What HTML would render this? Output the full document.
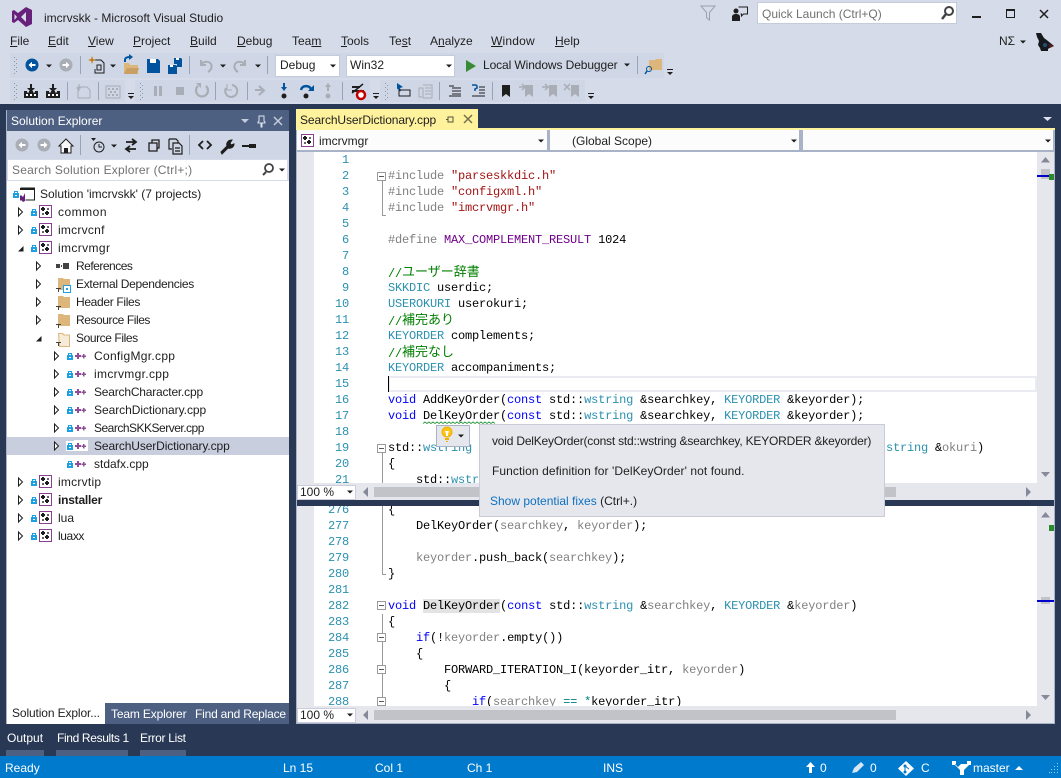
<!DOCTYPE html>
<html><head><meta charset="utf-8"><title>imcrvskk - Microsoft Visual Studio</title>
<style>
html,body{margin:0;padding:0}
body{width:1061px;height:778px;overflow:hidden;position:relative;background:#293955;font-family:"Liberation Sans","Noto Sans CJK JP",sans-serif;font-size:12px;color:#1e1e1e}
.b{position:absolute}
.t{position:absolute;white-space:pre;line-height:16px;height:16px}
.t u{text-decoration:underline}
.pane{position:absolute;left:297px;width:740px;overflow:hidden;background:#fff;font-family:"Liberation Mono","Noto Sans CJK JP",monospace;font-size:12px;letter-spacing:-.2px;color:#000}
.mg{position:absolute;left:0;top:0;bottom:0;width:17px;background:#e6e7ed}
.n,.c{position:absolute;top:0}
.n{left:17px;width:35px;text-align:right;color:#2b91af}
.c{left:91px}
.n div,.c div{height:16px;line-height:16px;white-space:pre}
.k{color:#0000ff}.y{color:#2b91af}.s{color:#a31515}.p{color:#808080}.m{color:#6f008a}.g{color:#008000}.a{color:#808080}.o{color:#008080}
.j{font-size:13px;line-height:16px;letter-spacing:0;font-family:"Noto Sans CJK JP",sans-serif;position:relative;top:-1px}
svg{position:absolute;left:0;top:0}
</style></head><body>

<div class="b" style="left:0;top:0;width:1061px;height:104px;background:#d6dbe9"></div>
<div class="t" style="left:44px;top:10px">imcrvskk - Microsoft Visual Studio</div>
<div class="t" style="left:10px;top:33px"><u>F</u>ile</div>
<div class="t" style="left:48px;top:33px"><u>E</u>dit</div>
<div class="t" style="left:88px;top:33px"><u>V</u>iew</div>
<div class="t" style="left:133px;top:33px"><u>P</u>roject</div>
<div class="t" style="left:190px;top:33px"><u>B</u>uild</div>
<div class="t" style="left:237px;top:33px"><u>D</u>ebug</div>
<div class="t" style="left:292px;top:33px">Tea<u>m</u></div>
<div class="t" style="left:341px;top:33px"><u>T</u>ools</div>
<div class="t" style="left:389px;top:33px">Te<u>s</u>t</div>
<div class="t" style="left:430px;top:33px">A<u>n</u>alyze</div>
<div class="t" style="left:491px;top:33px;letter-spacing:.2px"><u>W</u>indow</div>
<div class="t" style="left:555px;top:33px"><u>H</u>elp</div>
<div class="b" style="left:757px;top:2px;width:198px;height:20px;background:#fff;border:1px solid #c4cbdb"></div>
<div class="t" style="left:762px;top:6px;color:#717171">Quick Launch (Ctrl+Q)</div>
<div class="t" style="left:999px;top:33px">NΣ</div>

<div class="b" style="left:10px;top:53px;width:665px;height:25px;background:#cfd6e5"></div>
<div class="b" style="left:664px;top:53px;width:11px;height:25px;background:#d6dbe9"></div>
<div class="b" style="left:10px;top:80px;width:586px;height:22px;background:#cfd6e5"></div>
<div class="b" style="left:125px;top:80px;width:10px;height:22px;background:#d6dbe9"></div>
<div class="b" style="left:370px;top:80px;width:10px;height:22px;background:#d6dbe9"></div>
<div class="b" style="left:585px;top:80px;width:11px;height:22px;background:#d6dbe9"></div>
<div class="b" style="left:275px;top:55px;width:63px;height:20px;background:#fff;border:1px solid #c4cbdb"></div>
<div class="t" style="left:280px;top:57px">Debug</div>
<div class="b" style="left:346px;top:55px;width:107px;height:20px;background:#fff;border:1px solid #c4cbdb"></div>
<div class="t" style="left:350px;top:57px">Win32</div>
<div class="t" style="left:483px;top:57px;letter-spacing:-.1px">Local Windows Debugger</div>

<div class="b" style="left:6px;top:110px;width:283px;height:614px;background:#a9b3c7"></div>
<div class="b" style="left:7px;top:131px;width:282px;height:593px;background:#fff"></div>
<div class="b" style="left:7px;top:110px;width:282px;height:21px;background:#4d6082"></div>
<div class="t" style="left:11px;top:113px;color:#fff">Solution Explorer</div>
<div class="b" style="left:7px;top:131px;width:282px;height:28px;background:#cfd6e5"></div>
<div class="b" style="left:7px;top:159px;width:282px;height:22px;background:#d6dbe9"></div>
<div class="b" style="left:8px;top:160px;width:279px;height:20px;background:#fff"></div>
<div class="t" style="left:12px;top:162px;color:#717171;letter-spacing:.22px">Search Solution Explorer (Ctrl+;)</div>
<div class="b" style="left:7px;top:437px;width:282px;height:18px;background:#c9cede"></div>

<div class="t" style="left:40px;top:186px">Solution 'imcrvskk' (7 projects)</div>
<div class="t" style="left:58px;top:204px;letter-spacing:.5px">common</div>
<div class="t" style="left:58px;top:222px;letter-spacing:.25px">imcrvcnf</div>
<div class="t" style="left:58px;top:240px;letter-spacing:.38px">imcrvmgr</div>
<div class="t" style="left:76px;top:258px;letter-spacing:-.5px">References</div>
<div class="t" style="left:76px;top:276px;letter-spacing:-.29px">External Dependencies</div>
<div class="t" style="left:76px;top:294px;letter-spacing:-.33px">Header Files</div>
<div class="t" style="left:76px;top:312px;letter-spacing:-.43px">Resource Files</div>
<div class="t" style="left:76px;top:330px;letter-spacing:-.42px">Source Files</div>
<div class="t" style="left:94px;top:348px;letter-spacing:.3px">ConfigMgr.cpp</div>
<div class="t" style="left:94px;top:366px;letter-spacing:.33px">imcrvmgr.cpp</div>
<div class="t" style="left:94px;top:384px;letter-spacing:-.2px">SearchCharacter.cpp</div>
<div class="t" style="left:94px;top:402px;letter-spacing:-.05px">SearchDictionary.cpp</div>
<div class="t" style="left:94px;top:420px;letter-spacing:-.5px">SearchSKKServer.cpp</div>
<div class="t" style="left:94px;top:438px;letter-spacing:-.12px">SearchUserDictionary.cpp</div>
<div class="t" style="left:94px;top:456px">stdafx.cpp</div>
<div class="t" style="left:58px;top:474px;letter-spacing:.25px">imcrvtip</div>
<div class="t" style="left:58px;top:492px;font-weight:bold;letter-spacing:-.22px">installer</div>
<div class="t" style="left:58px;top:510px">lua</div>
<div class="t" style="left:58px;top:528px;letter-spacing:-.4px">luaxx</div>

<div class="b" style="left:105px;top:703px;width:184px;height:21px;background:#4d6082"></div>
<div class="t" style="left:12px;top:705px;letter-spacing:-.12px">Solution Explor...</div>
<div class="t" style="left:111px;top:706px;color:#fff;letter-spacing:-.15px">Team Explorer</div>
<div class="t" style="left:195px;top:706px;color:#fff;letter-spacing:-.2px">Find and Replace</div>

<div class="b" style="left:296px;top:109px;width:182px;height:20px;background:#fff29d"></div>
<div class="t" style="left:300px;top:112px;letter-spacing:-.1px">SearchUserDictionary.cpp</div>
<div class="b" style="left:296px;top:128px;width:759px;height:2px;background:#fff29d"></div>
<div class="b" style="left:296px;top:130px;width:759px;height:22px;background:#a9b3c7"></div>
<div class="b" style="left:297px;top:130px;width:250px;height:20px;background:#fcfcfc"></div>
<div class="b" style="left:550px;top:130px;width:249px;height:20px;background:#fcfcfc"></div>
<div class="b" style="left:803px;top:130px;width:250px;height:20px;background:#fcfcfc"></div>
<div class="t" style="left:319px;top:133px">imcrvmgr</div>
<div class="t" style="left:572px;top:133px">(Global Scope)</div>

<div class="pane" style="top:152px;height:331px">
<div class="mg"></div>
<div class="b" style="left:91px;top:224px;width:645px;height:12px;border:2px solid #eaeaf2"></div>
<div class="b" style="left:91px;top:224px;width:1px;height:16px;background:#000"></div>
<div class="n"><div>1</div><div>2</div><div>3</div><div>4</div><div>5</div><div>6</div><div>7</div><div>8</div><div>9</div><div>10</div><div>11</div><div>12</div><div>13</div><div>14</div><div>15</div><div>16</div><div>17</div><div>18</div><div>19</div><div>20</div><div>21</div></div>
<div class="c"><div> </div>
<div><span class="p">#include</span> <span class="s">"parseskkdic.h"</span></div>
<div><span class="p">#include</span> <span class="s">"configxml.h"</span></div>
<div><span class="p">#include</span> <span class="s">"imcrvmgr.h"</span></div>
<div> </div>
<div><span class="p">#define</span> <span class="m">MAX_COMPLEMENT_RESULT</span> 1024</div>
<div> </div>
<div class="g">//<span class="j">ユーザー辞書</span></div>
<div><span class="y">SKKDIC</span> userdic;</div>
<div><span class="y">USEROKURI</span> userokuri;</div>
<div class="g">//<span class="j">補完あり</span></div>
<div><span class="y">KEYORDER</span> complements;</div>
<div class="g">//<span class="j">補完なし</span></div>
<div><span class="y">KEYORDER</span> accompaniments;</div>
<div> </div>
<div><span class="k">void</span> AddKeyOrder(<span class="k">const</span> std::<span class="y">wstring</span> &amp;searchkey, <span class="y">KEYORDER</span> &amp;keyorder);</div>
<div><span class="k">void</span> DelKeyOrder(<span class="k">const</span> std::<span class="y">wstring</span> &amp;searchkey, <span class="y">KEYORDER</span> &amp;keyorder);</div>
<div> </div>
<div>std::<span class="y">wstring</span></div>
<div>{</div>
<div>    std::<span class="y">wstring</span></div></div>
<div class="b" style="left:589px;top:288px;white-space:pre;line-height:16px"><span class="y">string</span> &amp;<span class="a">okuri</span>)</div>
</div>

<div class="b" style="left:297px;top:483px;width:757px;height:17px;background:#e6e7ed"></div>
<div class="b" style="left:297px;top:485px;width:57px;height:13px;background:#fff;border:1px solid #ccd"></div>
<div class="t" style="left:300px;top:484px">100 %</div>
<div class="b" style="left:374px;top:487px;width:522px;height:10px;background:#c2c3c9"></div>

<div class="pane" style="top:506px;height:200px">
<div class="mg"></div>
<div class="n" style="top:-4px"><div>276</div><div>277</div><div>278</div><div>279</div><div>280</div><div>281</div><div>282</div><div>283</div><div>284</div><div>285</div><div>286</div><div>287</div><div>288</div></div>
<div class="c" style="top:-4px"><div>{</div>
<div>    DelKeyOrder(<span class="a">searchkey</span>, <span class="a">keyorder</span>);</div>
<div> </div>
<div>    <span class="a">keyorder</span>.push_back(<span class="a">searchkey</span>);</div>
<div>}</div>
<div> </div>
<div><span class="k">void</span> <span style="background:#e3e3e3">DelKeyOrder</span>(<span class="k">const</span> std::<span class="y">wstring</span> &amp;<span class="a">searchkey</span>, <span class="y">KEYORDER</span> &amp;<span class="a">keyorder</span>)</div>
<div>{</div>
<div>    <span class="k">if</span>(!<span class="a">keyorder</span>.empty())</div>
<div>    {</div>
<div>        FORWARD_ITERATION_I(keyorder_itr, <span class="a">keyorder</span>)</div>
<div>        {</div>
<div>            <span class="k">if</span>(<span class="a">searchkey</span> <span class="o">==</span> <span class="o">*</span>keyorder_itr)</div></div>
</div>

<div class="b" style="left:1037px;top:152px;width:17px;height:331px;background:#e6e7ed"></div>
<div class="b" style="left:1037px;top:506px;width:17px;height:200px;background:#e6e7ed"></div>
<div class="b" style="left:297px;top:706px;width:757px;height:17px;background:#e6e7ed"></div>
<div class="b" style="left:296px;top:723px;width:759px;height:1px;background:#a9b3c7"></div>
<div class="b" style="left:296px;top:152px;width:1px;height:571px;background:#a9b3c7"></div>
<div class="b" style="left:1054px;top:152px;width:1px;height:571px;background:#a9b3c7"></div>
<div class="b" style="left:297px;top:708px;width:57px;height:13px;background:#fff;border:1px solid #ccd"></div>
<div class="t" style="left:300px;top:707px">100 %</div>
<div class="b" style="left:374px;top:710px;width:522px;height:10px;background:#c2c3c9"></div>

<div class="t" style="left:7px;top:730px;color:#fff">Output</div>
<div class="t" style="left:57px;top:730px;color:#fff;letter-spacing:-.35px">Find Results 1</div>
<div class="t" style="left:140px;top:730px;color:#fff;letter-spacing:-.3px">Error List</div>
<div class="b" style="left:6px;top:750px;width:38px;height:6px;background:#4d6082"></div>
<div class="b" style="left:56px;top:750px;width:72px;height:6px;background:#4d6082"></div>
<div class="b" style="left:140px;top:750px;width:46px;height:6px;background:#4d6082"></div>
<div class="b" style="left:0;top:756px;width:1061px;height:22px;background:#007acc"></div>
<div class="t" style="left:5px;top:760px;color:#fff">Ready</div>
<div class="t" style="left:283px;top:760px;color:#fff">Ln 15</div>
<div class="t" style="left:375px;top:760px;color:#fff">Col 1</div>
<div class="t" style="left:467px;top:760px;color:#fff">Ch 1</div>
<div class="t" style="left:603px;top:760px;color:#fff">INS</div>
<div class="t" style="left:820px;top:760px;color:#fff">0</div>
<div class="t" style="left:870px;top:760px;color:#fff">0</div>
<div class="t" style="left:921px;top:760px;color:#fff">C</div>
<div class="t" style="left:973px;top:760px;color:#fff">master</div>

<svg width="1061" height="778" viewBox="0 0 1061 778">
<defs>
<path id="dn" d="M-3-1.5h6L0 1.5z" fill="#1e1e1e"/>
<path id="exp" d="M.5 0l4 4-4 4z" fill="#fff" stroke="#1e1e1e"/>
<path id="col" d="M5.5 0v5.5H0z" fill="#1e1e1e"/>
<g id="lock"><path d="M1.5 3V1.5h3V3" fill="none" stroke="#1ba1e2"/><rect x="0" y="3" width="6" height="5" fill="#1ba1e2"/><rect x="2" y="5" width="2" height="1" fill="#fff"/></g>
<g id="proj"><rect x=".5" y=".5" width="12" height="12" fill="#fff" stroke="#8a3f92"/><path d="M3 2h2v1h1v2H5v1H3V5H2V3h1zM7 6h2v1h1v2H9v1H7V9H6V7h1z" fill="#1e1e1e"/><path d="M8 3h2v2H8zM3 8h2v2H3z" fill="#666"/></g>
<path id="pp" d="M2 2h2v2h2v2H4v2H2V6H0V4h2zM8 3h1.500v1.500H11v1.500H9.500v1.500H8V6H6.500V4.500H8z" fill="#8f4d97"/>
<g id="fold"><path d="M2 1h5l1 1h6v11H2z" fill="#dcb67a"/><path d="M0 11h5v1H3v3H2v-3H0z" fill="#424242"/></g>
<g id="grip"><path d="M0 0h1v1H0zM2 2h1v1H2zM0 4h1v1H0zM2 6h1v1H2zM0 8h1v1H0zM2 10h1v1H2zM0 12h1v1H0zM2 14h1v1H2zM0 16h1v1H0z" fill="#8f96a6"/></g>
<g id="ovf"><path d="M-3-1h6v1h-6zM-3 2h6L0 5z" fill="#1e1e1e"/></g>
<g id="circ"><circle r="6.500" fill="currentColor"/><path d="M-3.500 0L0-3.200V-1h3.500v2H0v2.200z" fill="#fff"/></g>
<g id="build"><path d="M-7 7V0h3v1.500h2V0h4v1.500h2V0h3v7z" fill="#1e1e1e"/><path d="M-1-7h2v4h3L0 1-4-3h3z" fill="#1e1e1e"/><path d="M-5 3h2v2h-2zM-1 3h2v2h-2zM3 3h2v2H3z" fill="#fff"/></g>
<g id="book"><path d="M-4-6h8V6L0 3-4 6z"/></g>
</defs>

<!-- title bar -->
<path d="M26 7l6 3v14l-6 3-8-7-4 3-2-1V11l2-1 4 3zM26 12l-5 5 5 5zM14.500 14v6l2.500-3z" fill="#68217a" fill-rule="evenodd"/>
<path d="M701 6h14l-5.500 6.500V20l-3-2.500V12.500z" fill="none" stroke="#9aa0ad"/>
<circle cx="736" cy="11" r="2.500" fill="#1e1e1e"/><path d="M732 21v-4c0-2 1.500-3 4-3s4 1 4 3v4z" fill="#1e1e1e"/><path d="M738.500 7h9v7h-4l-2 2v-2h-1" fill="none" stroke="#1e1e1e"/>
<circle cx="949" cy="11" r="4" fill="none" stroke="#424242" stroke-width="2"/><path d="M946 14l-4 5" stroke="#424242" stroke-width="2.500"/>
<rect x="972" y="16" width="9" height="2" fill="#1e1e1e"/>
<path d="M1006.500 9.500h8v8h-8z" fill="none" stroke="#1e1e1e"/><rect x="1006" y="9" width="9" height="2" fill="#1e1e1e"/>
<path d="M1040 10l8 8M1048 10l-8 8" stroke="#1e1e1e" stroke-width="1.500"/>
<use href="#dn" x="1023" y="42"/>
<path d="M1036 33h5l3 5 4 3 6 5-3 1-3 2v2h-7l-1-3-2-3 1-4-2-4z" fill="#16191e"/><path d="M1048 44l6 2-4 2z" fill="#5a1a1e"/><circle cx="1045" cy="45" r="2" fill="#24506e"/>

<!-- toolbar 1 -->
<use href="#grip" x="14" y="57"/>
<use href="#circ" x="32" y="65" color="#00539c"/><use href="#dn" x="49" y="66"/>
<use href="#circ" x="66" y="65" color="#a9adb5" transform="translate(132 0) scale(-1 1)"/>
<rect x="80" y="56" width="1" height="18" fill="#9aa3b5"/>
<path d="M93 60h8l3 3v10h-9v-4" fill="none" stroke="#1e1e1e"/><path d="M92 56l1 3 3 1-3 1-1 3-1-3-3-1 3-1z" fill="#c27d1a"/><rect x="97" y="65" width="4" height="5" fill="none" stroke="#1e1e1e"/>
<use href="#dn" x="113" y="66"/>
<path d="M124 63h5l1 2h8v9h-14z" fill="#dcb67a"/><path d="M124 74l3-6h12l-2 6z" fill="#c8a063"/><path d="M125 62v-2c0-2 2-3 5-3" fill="none" stroke="#00539c" stroke-width="2"/><path d="M129 54l4 3-4 3z" fill="#00539c"/>
<path d="M147 59h11l2 2v12h-13z" fill="#00539c"/><rect x="150" y="59" width="6" height="4" fill="#fff"/>
<path d="M168 65h8l1 1v8h-9z" fill="#00539c"/><path d="M174 58h7l1 1v8h-5v-3h-3z" fill="#00539c"/><rect x="170" y="65" width="3" height="2" fill="#fff"/><rect x="176" y="58" width="3" height="2" fill="#fff"/>
<rect x="189" y="56" width="1" height="18" fill="#9aa3b5"/>
<path d="M201 60v5h5M201.500 64.500c2-3.500 9-4 10 1 .5 3-1 5-3.500 6.500" fill="none" stroke="#a9adb5" stroke-width="2"/>
<use href="#dn" x="223" y="66"/>
<path d="M245 60v5h-5M244.500 64.500c-2-3.500-9-4-10 1-.5 3 1 5 3.500 6.500" fill="none" stroke="#a9adb5" stroke-width="2"/>
<use href="#dn" x="258" y="66"/>
<rect x="267" y="56" width="1" height="18" fill="#9aa3b5"/>
<use href="#dn" x="333" y="66"/><use href="#dn" x="449" y="66"/>
<path d="M466 60l10 6-10 6z" fill="#388a34"/>
<use href="#dn" x="627" y="65"/>
<rect x="637" y="56" width="1" height="18" fill="#9aa3b5"/>
<path d="M649 60h6l1-1h6v11h-13z" fill="#dcb67a"/><circle cx="649" cy="69" r="2.500" fill="none" stroke="#00539c"/><path d="M647 71l-2 3" stroke="#00539c" stroke-width="1.500"/>
<use href="#ovf" x="670" y="70"/>

<!-- toolbar 2 -->
<use href="#grip" x="14" y="83"/>
<use href="#build" x="31" y="91"/><use href="#build" x="53" y="91"/>
<rect x="67" y="82" width="1" height="18" fill="#9aa3b5"/>
<path d="M78 87h9l3 3v8H78zM76 88h5M79 84v7" fill="none" stroke="#a9adb5"/>
<rect x="98" y="82" width="1" height="18" fill="#9aa3b5"/>
<path d="M106 86h14v12h-14z" fill="none" stroke="#a9adb5"/><path d="M108 88h2v2h-2zM112 88h2v2h-2zM116 88h2v2h-2zM110 91h2v2h-2zM114 91h2v2h-2zM108 94h2v2h-2zM112 94h2v2h-2zM116 94h2v2h-2z" fill="#a9adb5"/>
<use href="#ovf" x="131" y="94"/>
<use href="#grip" x="140" y="83"/>
<path d="M154 86h3v10h-3zM159 86h3v10h-3z" fill="#a9adb5"/>
<rect x="176" y="87" width="8" height="8" fill="#a9adb5"/>
<path d="M198 86a6 6 0 1 0 8 0" fill="none" stroke="#a9adb5" stroke-width="2.200"/><path d="M196 83h5v5z" fill="#a9adb5"/>
<rect x="215" y="82" width="1" height="18" fill="#9aa3b5"/>
<path d="M226 88a6 6 0 1 0 6-3" fill="none" stroke="#a9adb5" stroke-width="2"/><path d="M227 84v6h5" fill="none" stroke="#a9adb5"/>
<rect x="247" y="82" width="1" height="18" fill="#9aa3b5"/>
<path d="M255 90h7M259 86l5 4.500-5 4.500" fill="none" stroke="#a9adb5" stroke-width="2"/>
<path d="M283 83h2v4h2l-3 4-3-4h2z" fill="#00539c"/><circle cx="284" cy="96" r="2.500" fill="#1e1e1e"/>
<path d="M301 90c1-5 8-5 10-1" fill="none" stroke="#00539c" stroke-width="2.500"/><path d="M314 85v6h-6z" fill="#00539c"/><circle cx="306" cy="96" r="2.500" fill="#1e1e1e"/>
<path d="M327 91v-4h-2l3-4 3 4h-2v4z" fill="#a9adb5"/><circle cx="328" cy="96" r="2.500" fill="#a9adb5"/>
<rect x="342" y="82" width="1" height="18" fill="#9aa3b5"/>
<path d="M352 87h8M352 91h12" stroke="#1e1e1e" stroke-width="2"/><path d="M352 93l11-9" stroke="#1e1e1e" stroke-width="1.500"/><circle cx="361" cy="95" r="4" fill="#fff" stroke="#c50000" stroke-width="2.500"/>
<use href="#ovf" x="376" y="94"/>
<use href="#grip" x="385" y="83"/>
<path d="M397 83l6 4-3 1 1 3-2 .5-1-3-1 1z" fill="#00539c"/><path d="M399 90h11v6h-11z" fill="none" stroke="#1e1e1e"/>
<path d="M419 88h4v9h-4zM423 85h9v13h-9M425 88h6M425 91h6M425 94h6" fill="none" stroke="#a9adb5"/>
<rect x="439" y="82" width="1" height="18" fill="#9aa3b5"/>
<path d="M449 86h5M452 88h9M452 91h9M452 94h9M449 96h12" stroke="#1e1e1e" fill="none"/>
<path d="M472 85h4l1 1v2l-2 1v2" fill="none" stroke="#00539c" stroke-width="1.500"/><path d="M479 87h6M479 90h6M479 93h6M472 96h13" stroke="#1e1e1e" fill="none"/>
<rect x="492" y="82" width="1" height="18" fill="#9aa3b5"/>
<use href="#book" x="506" y="91" fill="#1e1e1e"/>
<use href="#book" x="529" y="91" fill="#a9adb5"/><path d="M519 87h6l-3-3M525 87l-3 3" fill="none" stroke="#a9adb5" stroke-width="1.500"/>
<use href="#book" x="553" y="91" fill="#a9adb5"/><path d="M542 87h6l-3-3M548 87l-3 3" fill="none" stroke="#a9adb5" stroke-width="1.500"/>
<use href="#book" x="575" y="91" fill="#a9adb5"/><path d="M564 84l6 6M570 84l-6 6" stroke="#a9adb5" stroke-width="1.500"/>
<use href="#ovf" x="591" y="94"/>

<!-- solution explorer title -->
<path d="M241 119h8l-4 4z" fill="#c4cbdb"/>
<path d="M259 116h5v5l1 1v1h-3v4h-1v-4h-3v-1l1-1z" fill="none" stroke="#dfe3ee"/>
<path d="M274 117l8 8M282 117l-8 8" stroke="#c4cbdb" stroke-width="1.500"/>

<!-- solution explorer toolbar -->
<use href="#circ" x="22" y="145" color="#a9adb5"/>
<use href="#circ" x="-44" y="145" color="#a9adb5" transform="scale(-1 1)"/>
<path d="M59 146l7-7 7 7h-2v7H61v-7z" fill="#f6f6f6" stroke="#1e1e1e"/><rect x="64" y="148" width="4" height="5" fill="#1e1e1e"/>
<rect x="80" y="135" width="1" height="20" fill="#9aa3b5"/>
<circle cx="99" cy="147" r="5" fill="none" stroke="#1e1e1e"/><path d="M99 144v3h3" fill="none" stroke="#1e1e1e"/><path d="M91 138h5l-2.500 3z" fill="#1e1e1e"/>
<use href="#dn" x="114" y="146"/>
<path d="M126 142h10M132 139l4 3-4 3M136 149h-10M130 146l-4 3 4 3" fill="none" stroke="#1e1e1e" stroke-width="1.800"/>
<path d="M149 143h8v8h-8zM152 143v-3h7v8h-2" fill="none" stroke="#1e1e1e" stroke-width="1.300"/>
<path d="M169 139h7l2 2v2M169 139v10h3M173 143h6l3 3v8h-9z M175 148h5M175 151h5" fill="none" stroke="#1e1e1e" stroke-width="1.200"/>
<rect x="189" y="135" width="1" height="20" fill="#9aa3b5"/>
<path d="M203 141l-4 4 4 4M207 141l4 4-4 4" fill="none" stroke="#1e1e1e" stroke-width="1.800"/>
<path d="M221 152l6-6c-1-3 1-6 5-6l-2 3 1 2 3-1c0 3-3 5-6 4l-6 6z" fill="#1e1e1e" stroke="#1e1e1e"/>
<rect x="242" y="144" width="14" height="4" fill="#1e1e1e"/><rect x="242" y="144" width="7" height="1" fill="#cfd6e5"/><rect x="242" y="147" width="7" height="1" fill="#cfd6e5"/>
<circle cx="269" cy="168" r="4" fill="none" stroke="#424242" stroke-width="1.800"/><path d="M266 172l-3 3" stroke="#424242" stroke-width="2"/>
<use href="#dn" x="282" y="170"/>

<!-- tree -->
<g id="sol"><use href="#lock" x="13" y="190"/><path d="M20.500 188h14v12h-9" fill="none" stroke="#1e1e1e"/><path d="M20 188h15v2H20z" fill="#1e1e1e"/><path d="M25 193v8l-2 1-2-2-1 1v-5l1-1 2 2z" fill="#68217a"/></g>
<use href="#exp" x="18" y="208"/><use href="#lock" x="31" y="208"/><use href="#proj" x="39" y="205"/>
<use href="#exp" x="18" y="226"/><use href="#lock" x="31" y="226"/><use href="#proj" x="39" y="223"/>
<use href="#col" x="18" y="246"/><use href="#lock" x="31" y="244"/><use href="#proj" x="39" y="241"/>
<use href="#exp" x="36" y="262"/><path d="M56 264h4v4h-4zM61 265h1v2h-1zM63 263h6v6h-6z" fill="#424242"/>
<use href="#exp" x="36" y="280"/><use href="#fold" x="56" y="277"/><rect x="63.500" y="285.500" width="7" height="7" fill="#fff" stroke="#1ba1e2"/><rect x="66" y="288" width="2" height="2" fill="#1ba1e2"/>
<use href="#exp" x="36" y="298"/><use href="#fold" x="56" y="295"/>
<use href="#exp" x="36" y="316"/><use href="#fold" x="56" y="313"/>
<use href="#col" x="36" y="336"/><path d="M58.500 333.500h4l1.500 1.500h5.500v11.500h-10z" fill="#f4ecd8" stroke="#dcb67a"/><path d="M56 342h5v1h-2v3h-1v-3h-2z" fill="#424242"/>
<use href="#exp" x="54" y="352"/><use href="#lock" x="67" y="352"/><use href="#pp" x="75" y="351"/>
<use href="#exp" x="54" y="370"/><use href="#lock" x="67" y="370"/><use href="#pp" x="75" y="369"/>
<use href="#exp" x="54" y="388"/><use href="#lock" x="67" y="388"/><use href="#pp" x="75" y="387"/>
<use href="#exp" x="54" y="406"/><use href="#lock" x="67" y="406"/><use href="#pp" x="75" y="405"/>
<use href="#exp" x="54" y="424"/><use href="#lock" x="67" y="424"/><use href="#pp" x="75" y="423"/>
<use href="#exp" x="54" y="442"/><rect x="66" y="441" width="8" height="10" fill="#fff"/><use href="#lock" x="67" y="442"/><rect x="74" y="440" width="14" height="11" fill="#fff"/><use href="#pp" x="75" y="441"/>
<use href="#lock" x="67" y="460"/><use href="#pp" x="75" y="459"/>
<use href="#exp" x="18" y="478"/><use href="#lock" x="31" y="478"/><use href="#proj" x="39" y="475"/>
<use href="#exp" x="18" y="496"/><use href="#lock" x="31" y="496"/><use href="#proj" x="39" y="493"/>
<use href="#exp" x="18" y="514"/><use href="#lock" x="31" y="514"/><use href="#proj" x="39" y="511"/>
<use href="#exp" x="18" y="532"/><use href="#lock" x="31" y="532"/><use href="#proj" x="39" y="529"/>

<!-- document tab / nav -->
<path d="M448 117h5v5h-5zM446 119.500h2" fill="none" stroke="#55523f"/>
<path d="M464 115l8 8M472 115l-8 8" stroke="#75714f" stroke-width="1.500"/>
<path d="M1043 117h9l-4.500 4z" fill="#dfe3ee"/>
<use href="#proj" x="301" y="134"/>
<use href="#dn" x="541" y="141"/><use href="#dn" x="794" y="141"/><use href="#dn" x="1048" y="141"/>

<!-- folding -->
<g fill="#fff" stroke="#9a9a9a">
<path d="M382.500 181V215.500H386" fill="none"/>
<path d="M382.500 453V483" fill="none"/>
<path d="M382.500 506V574.500H386" fill="none"/>
<path d="M382.500 614V706" fill="none"/>
<rect x="377.500" y="172.500" width="8" height="8"/>
<rect x="377.500" y="444.500" width="8" height="8"/>
<rect x="377.500" y="601.500" width="8" height="8"/>
<rect x="377.500" y="633.500" width="8" height="8"/>
<rect x="377.500" y="665.500" width="8" height="8"/>
<rect x="377.500" y="697.500" width="8" height="8"/>
</g>
<path d="M379 176.500h5M379 448.500h5M379 605.500h5M379 637.500h5M379 669.500h5M379 701.500h5" stroke="#5a5a5a"/>
<path d="M423 423.500l2-1.500 2 1.500 2-1.500 2 1.500 2-1.500 2 1.500 2-1.500 2 1.500 2-1.500 2 1.500 2-1.500 2 1.500 2-1.500 2 1.500 2-1.500 2 1.500 2-1.500 2 1.500 2-1.500 2 1.500 2-1.500 2 1.500 2-1.500 2 1.500 2-1.500 2 1.500 2-1.500 2 1.500 2-1.500 2 1.500 2-1.500 2 1.500 2-1.500 2 1.500 2-1.500 2 1.500" fill="none" stroke="#3aa04a"/>

<!-- scrollbars -->
<path d="M1041 162.500h9L1045.500 157z" fill="#868999"/>
<rect x="1041" y="169" width="9" height="10" fill="#c2c3c9"/>
<rect x="1037" y="175" width="12" height="2" fill="#0000cd"/><rect x="1049" y="174" width="5" height="6" fill="#2b8a2b"/>
<path d="M1041 472h9l-4.500 5z" fill="#868999"/>
<path d="M1041 517.500h9L1045.500 512z" fill="#868999"/>
<rect x="1049" y="525" width="5" height="6" fill="#2b8a2b"/>
<rect x="1041" y="597" width="9" height="7" fill="#c2c3c9"/><rect x="1037" y="600" width="17" height="2" fill="#0000cd"/>
<path d="M1041 695h9l-4.500 5z" fill="#868999"/>
<path d="M368 487v10l-5-5z" fill="#868999"/><path d="M1026 487v10l5-5z" fill="#868999"/>
<path d="M368 710v10l-5-5z" fill="#868999"/><path d="M1026 710v10l5-5z" fill="#868999"/>
<use href="#dn" x="350" y="492"/><use href="#dn" x="350" y="715"/>

<!-- status -->
<path d="M806 767l4.500-5 4.500 5h-3v6h-3v-6z" fill="#fff"/>
<path d="M852 773l2-5 7-6 3 3-7 7z" fill="#d7e6f2"/>
<path d="M906 761l8 7.500-8 7.500-8-7.500z" fill="#fff"/><circle cx="905" cy="766" r="1.500" fill="#007acc"/><circle cx="905" cy="772" r="1.500" fill="#007acc"/><path d="M905 766v6M905 766l4 3" stroke="#007acc"/>
<path d="M952 761h4v3h-1l3 3 3-3h3l3 0v-3h4v4h-2l-5 5v5h-4v-5l-5-5h-3z" fill="#fff"/>
<path d="M1015 770h8l-4-4z" fill="#fff"/>
<path d="M1057 763h1v1h-1zM1054 766h1v1h-1zM1057 766h1v1h-1zM1051 769h1v1h-1zM1054 769h1v1h-1zM1057 769h1v1h-1zM1049 772h1v1h-1zM1051 772h1v1h-1zM1054 772h1v1h-1zM1057 772h1v1h-1z" fill="#9fd0ee"/>
</svg>

<div class="b" style="left:436px;top:425px;width:32px;height:20px;background:#e6e7ed;border:1px solid #a9b3c7"></div>
<div class="b" style="left:479px;top:424px;width:404px;height:91px;background:#e6e7ed;border:1px solid #c9ccd6"></div>
<div class="t" style="left:492px;top:433px;letter-spacing:-.2px">void DelKeyOrder(const std::wstring &amp;searchkey, KEYORDER &amp;keyorder)</div>
<div class="t" style="left:492px;top:463px;letter-spacing:.08px">Function definition for 'DelKeyOrder' not found.</div>
<div class="t" style="left:490px;top:493px"><span style="color:#0e70c0">Show potential fixes</span> (Ctrl+.)</div>
<svg width="1061" height="778" viewBox="0 0 1061 778">
<circle cx="447" cy="432" r="5" fill="#fcc419" stroke="#f0b000"/><path d="M445 431h4l-1 3v2h-2v-2z" fill="#fff"/><rect x="445" y="438" width="4" height="2" fill="#f0b000"/><rect x="446" y="441" width="2" height="1" fill="#f0b000"/>
<use href="#dn" x="461" y="436"/>
</svg>
</body></html>
